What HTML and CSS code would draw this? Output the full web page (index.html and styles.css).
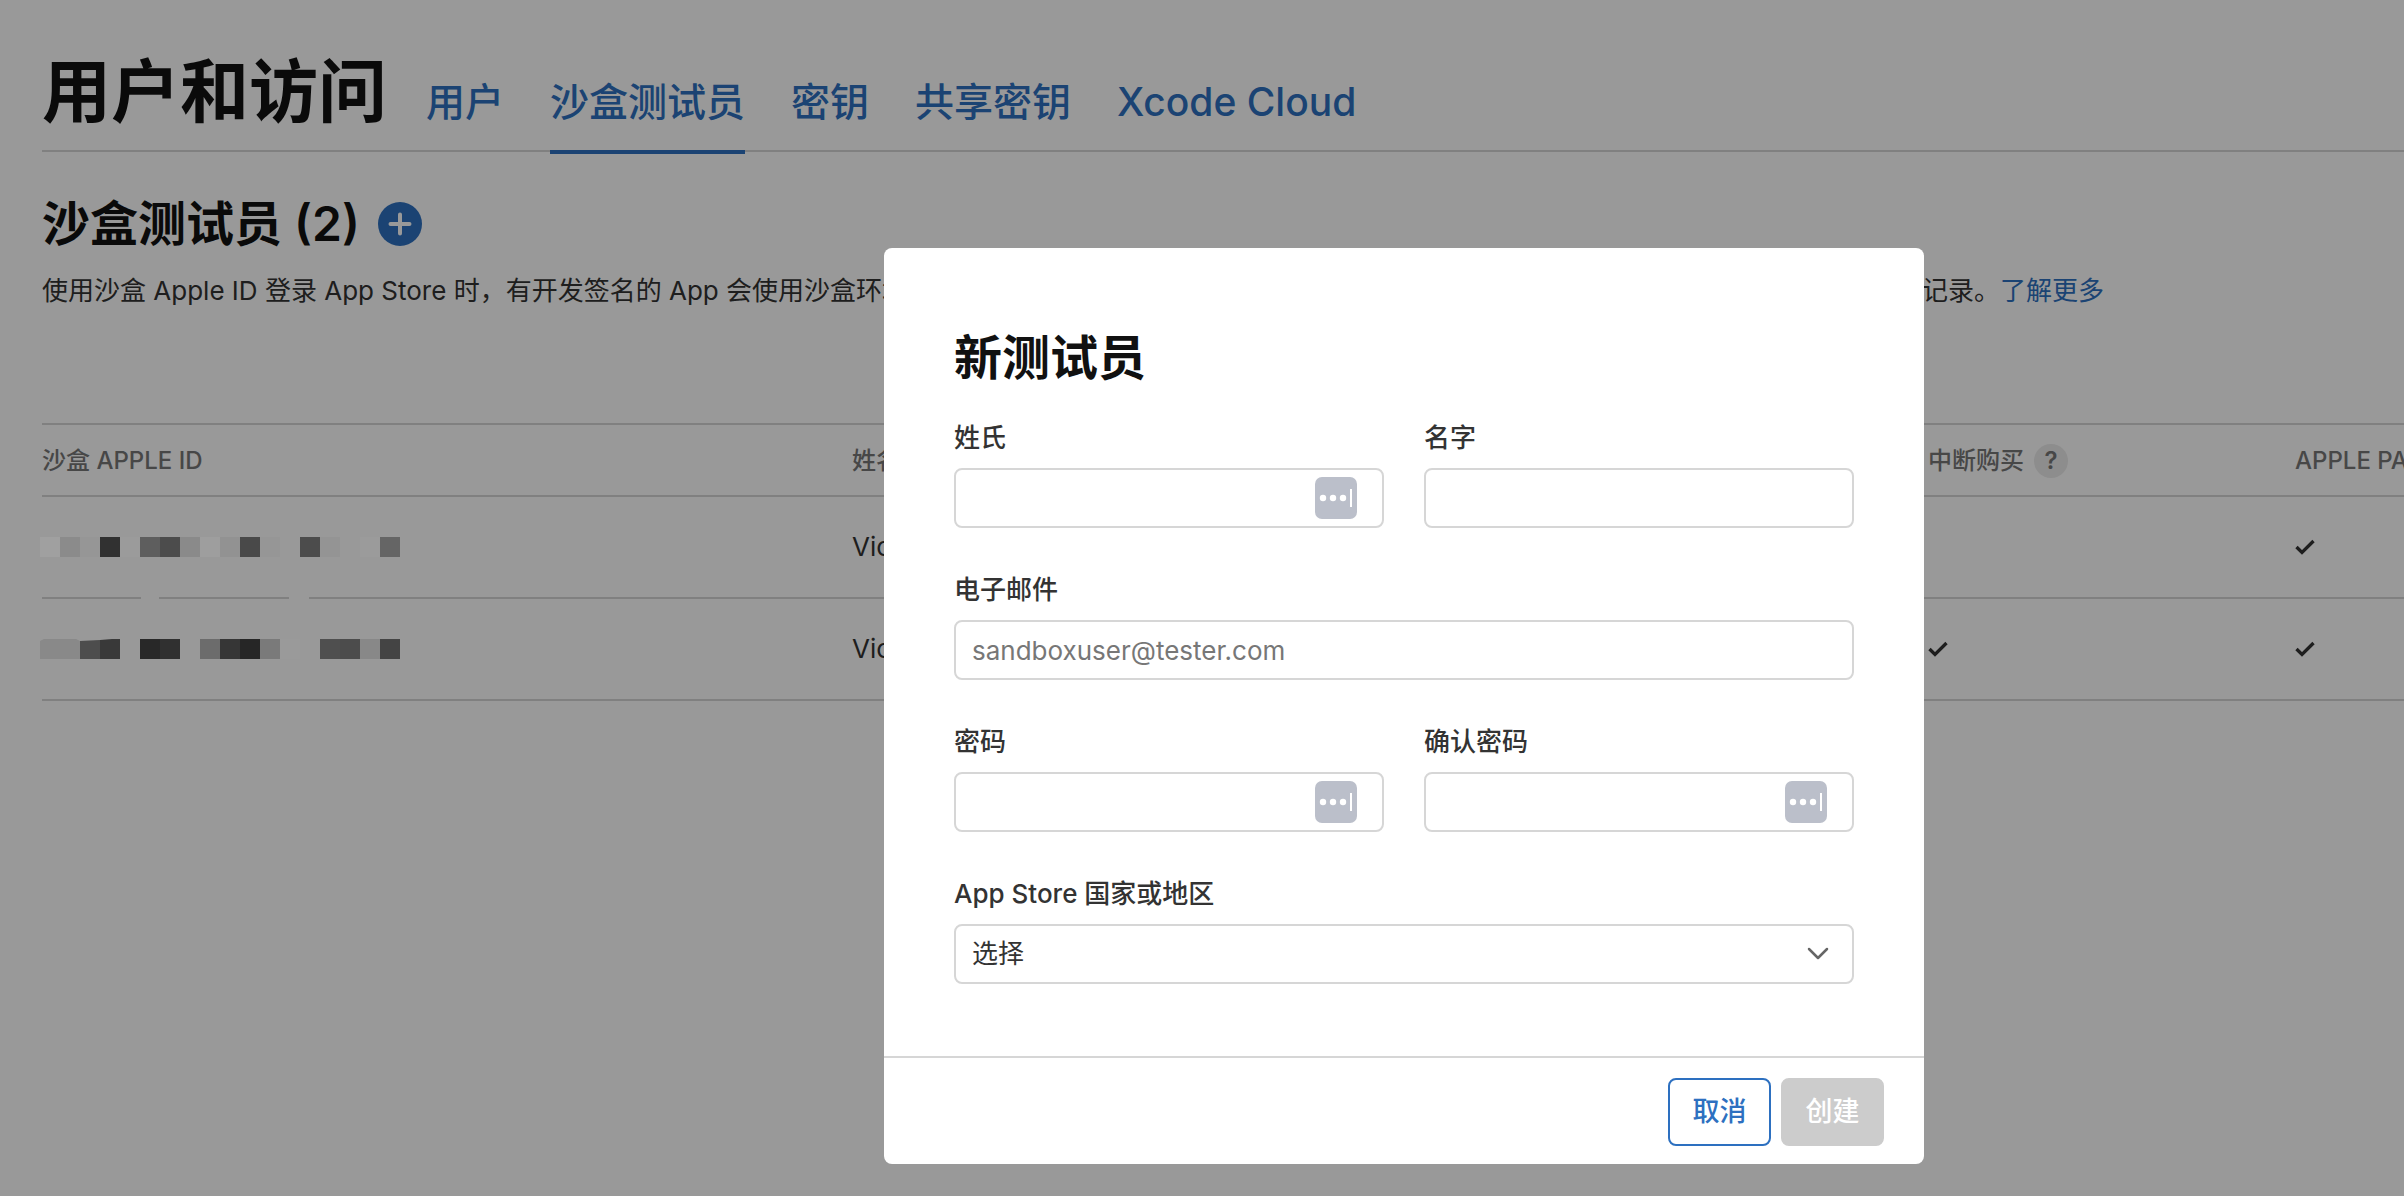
FILE: index.html
```html
<!DOCTYPE html>
<html lang="zh-CN">
<head>
<meta charset="utf-8">
<meta name="viewport" content="width=device-width, initial-scale=1">
<title>用户和访问</title>
<link rel="stylesheet" href="styles.css">
</head>
<body>
<div class="page">
  <header class="page-header">
    <h1 class="page-title">用户和访问</h1>
    <nav class="tabs">
      <a class="tab" href="#users">用户</a>
      <a class="tab tab-active" href="#sandbox" aria-current="page">沙盒测试员</a>
      <a class="tab" href="#keys">密钥</a>
      <a class="tab" href="#shared">共享密钥</a>
      <a class="tab" href="#cloud">Xcode Cloud</a>
    </nav>
  </header>

  <main>
    <div class="section-head">
      <h2 class="section-title">沙盒测试员 (2)</h2>
      <button class="add-button" type="button" aria-label="添加测试员">
        <svg width="44" height="44" viewBox="0 0 44 44" aria-hidden="true"><path d="M22 12.500v19M12.500 22h19" stroke="#fff" stroke-width="4" stroke-linecap="round"/></svg>
      </button>
    </div>
    <p class="intro">使用沙盒 Apple ID 登录 App Store 时，有开发签名的 App 会使用沙盒环境，而不会使用生产环境。您可以在此反复测试购买流程且不会产生费用，也能够清除购买记录。<a class="link" href="#more">了解更多</a></p>

    <table class="testers">
      <colgroup><col class="col-id"><col class="col-name"><col class="col-region"><col class="col-purchase"><col class="col-pay"></colgroup>
      <thead>
        <tr>
          <th scope="col">沙盒 APPLE ID</th>
          <th scope="col">姓名</th>
          <th scope="col"></th>
          <th scope="col"><span class="with-help">中断购买 <button class="help" type="button" aria-label="帮助">?</button></span></th>
          <th scope="col">APPLE PAY</th>
        </tr>
      </thead>
      <tbody>
        <tr>
          <td>
            <svg class="redacted" width="360" height="20" viewBox="0 0 360 20" shape-rendering="crispEdges" aria-hidden="true">
              <path fill="#a0a0a0" d="M0 0h20v20H0z"/><path fill="#8b8b8b" d="M20 0h20v20H20z"/><path fill="#969696" d="M40 0h20v20H40z"/><path fill="#313131" d="M60 0h20v20H60z"/><path fill="#9b9b9b" d="M80 0h20v20H80z"/><path fill="#5e5e5e" d="M100 0h20v20H100z"/><path fill="#4c4c4c" d="M120 0h20v20H120z"/><path fill="#8a8a8a" d="M140 0h20v20H140z"/><path fill="#9e9e9e" d="M160 0h20v20H160z"/><path fill="#929292" d="M180 0h20v20H180z"/><path fill="#494949" d="M200 0h20v20H200z"/><path fill="#969696" d="M220 0h20v20H220z"/><path fill="#4c4c4c" d="M260 0h20v20H260z"/><path fill="#949494" d="M280 0h20v20H280z"/><path fill="#9b9b9b" d="M320 0h20v20H320z"/><path fill="#656565" d="M340 0h20v20H340z"/>
              <path fill="#999" d="M101 56h18v8h-18zM249 56h20v8h-20z"/>
            </svg>
          </td>
          <td>Victor</td><td></td><td></td>
          <td><svg class="check" width="20" height="16" viewBox="0 0 20 16" role="img" aria-label="是"><path d="M1.500 8 7 13.500 18.500 2" fill="none" stroke="#333" stroke-width="3.300"/></svg></td>
        </tr>
        <tr>
          <td>
            <svg class="redacted" width="360" height="20" viewBox="0 0 360 20" aria-hidden="true">
              <path fill="#898989" d="M0 2 4 0h32l4 2v18H0z"/><path fill="#4d4d4d" d="M40 2 60 1v19H40z"/><path fill="#393939" d="M60 1 72 0h8v20H60z"/><path fill="#282828" d="M100 0h20v20h-20z"/><path fill="#303030" d="M120 0h20v20h-20z"/><path fill="#6c6c6c" d="M160 0h20v20h-20z"/><path fill="#363636" d="M180 0h20v20h-20z"/><path fill="#262626" d="M200 0h20v20h-20z"/><path fill="#7a7a7a" d="M220 0h20v20h-20z"/><path fill="#9a9a9a" d="M240 0h20v20h-20z"/><path fill="#4f4f4f" d="M280 0h20v20h-20z"/><path fill="#4c4c4c" d="M300 0h20v20h-20z"/><path fill="#888" d="M320 0h20v20h-20z"/><path fill="#444" d="M340 0h20v20h-20z"/>
            </svg>
          </td>
          <td>Victor</td><td></td>
          <td><svg class="check" width="20" height="16" viewBox="0 0 20 16" role="img" aria-label="是"><path d="M1.500 8 7 13.500 18.500 2" fill="none" stroke="#333" stroke-width="3.300"/></svg></td>
          <td><svg class="check" width="20" height="16" viewBox="0 0 20 16" role="img" aria-label="是"><path d="M1.500 8 7 13.500 18.500 2" fill="none" stroke="#333" stroke-width="3.300"/></svg></td>
        </tr>
      </tbody>
    </table>
  </main>
</div>

<div class="backdrop"></div>
<div class="modal-layer">
  <form class="modal" role="dialog" aria-modal="true" aria-labelledby="modal-title">
    <div class="modal-body">
      <h2 class="modal-title" id="modal-title">新测试员</h2>
      <div class="fields">
        <div class="field">
          <label for="last-name">姓氏</label>
          <div class="control">
            <input id="last-name" type="text">
            <svg class="autofill" width="42" height="42" viewBox="0 0 42 42" aria-hidden="true"><rect width="42" height="42" rx="7" fill="#bbbfca"/><g fill="#fff"><circle cx="8" cy="21" r="3.200"/><circle cx="18" cy="21" r="3.200"/><circle cx="28" cy="21" r="3.200"/><rect x="35" y="12" width="2" height="18"/></g></svg>
          </div>
        </div>
        <div class="field">
          <label for="first-name">名字</label>
          <div class="control"><input id="first-name" type="text"></div>
        </div>
        <div class="field field-wide">
          <label for="email">电子邮件</label>
          <div class="control"><input id="email" type="email" placeholder="sandboxuser@tester.com"></div>
        </div>
        <div class="field">
          <label for="password">密码</label>
          <div class="control">
            <input id="password" type="password">
            <svg class="autofill" width="42" height="42" viewBox="0 0 42 42" aria-hidden="true"><rect width="42" height="42" rx="7" fill="#bbbfca"/><g fill="#fff"><circle cx="8" cy="21" r="3.200"/><circle cx="18" cy="21" r="3.200"/><circle cx="28" cy="21" r="3.200"/><rect x="35" y="12" width="2" height="18"/></g></svg>
          </div>
        </div>
        <div class="field">
          <label for="confirm">确认密码</label>
          <div class="control">
            <input id="confirm" type="password">
            <svg class="autofill" width="42" height="42" viewBox="0 0 42 42" aria-hidden="true"><rect width="42" height="42" rx="7" fill="#bbbfca"/><g fill="#fff"><circle cx="8" cy="21" r="3.200"/><circle cx="18" cy="21" r="3.200"/><circle cx="28" cy="21" r="3.200"/><rect x="35" y="12" width="2" height="18"/></g></svg>
          </div>
        </div>
        <div class="field field-wide">
          <label for="region">App Store 国家或地区</label>
          <div class="control">
            <select id="region"><option>选择</option></select>
            <svg class="chevron" width="22" height="14" viewBox="0 0 22 14" aria-hidden="true"><path d="M2 2l9 9 9-9" fill="none" stroke="#666" stroke-width="2.500" stroke-linecap="round" stroke-linejoin="round"/></svg>
          </div>
        </div>
      </div>
    </div>
    <div class="modal-footer">
      <button class="button button-secondary" type="button">取消</button>
      <button class="button button-primary" type="submit" disabled>创建</button>
    </div>
  </form>
</div>
</body>
</html>
```
FILE: styles.css
```css
* {
  box-sizing: border-box;
}

:root {
  --blue: #2d70c0;
  --line: #d6d6d6;
  --text: #333;
}

body {
  margin: 0;
  background: #fff;
  color: var(--text);
  font-family: Inter, "Noto Sans CJK SC", sans-serif;
  font-size: 26px;
  line-height: 40px;
}

h1, h2, p {
  margin: 0;
}

button, input, select {
  font: inherit;
}

.page {
  min-height: 100vh;
  padding: 52px 0 0 42px;
  overflow: hidden;
}

.page-header {
  display: flex;
  align-items: flex-start;
  gap: 39px;
  height: 100px;
  border-bottom: 2px solid var(--line);
}

.page-title {
  color: #111;
  font-size: 69px;
  font-weight: 600;
  line-height: 80px;
  white-space: nowrap;
}

.tabs {
  display: flex;
  gap: 46px;
}

.tab {
  height: 102px;
  padding-top: 20px;
  color: var(--blue);
  font-size: 39px;
  font-weight: 500;
  line-height: 60px;
  text-decoration: none;
  white-space: nowrap;
}

.tab-active {
  border-bottom: 4px solid var(--blue);
}

.section-head {
  display: flex;
  align-items: center;
  gap: 18px;
  height: 60px;
  margin-top: 42px;
}

.section-title,
.modal-title {
  color: #111;
  font-size: 48px;
  font-weight: 600;
  line-height: 60px;
}

.add-button {
  width: 44px;
  height: 44px;
  padding: 0;
  border: 0;
  border-radius: 50%;
  background: var(--blue);
}

.add-button svg {
  display: block;
}

.intro {
  margin-top: 17px;
  white-space: nowrap;
}

.link {
  color: var(--blue);
  text-decoration: none;
}

.testers {
  width: 2553px;
  margin-top: 112px;
  border-top: 2px solid var(--line);
  border-spacing: 0;
  table-layout: fixed;
}

.col-id { width: 810px; }
.col-name { width: 540px; }
.col-region { width: 536px; }
.col-purchase { width: 367px; }
.col-pay { width: 300px; }

.testers th,
.testers td {
  padding: 0;
  border-bottom: 2px solid var(--line);
  text-align: left;
  vertical-align: middle;
}

.testers th {
  height: 72px;
  padding-top: 2px;
  color: #777;
  font-size: 24px;
  font-weight: 500;
}

.testers td {
  height: 102px;
}

.testers svg {
  display: block;
}

.testers .redacted {
  position: relative;
  z-index: 2;
  margin-left: -2px;
  overflow: visible;
}

.with-help {
  display: flex;
  align-items: center;
  gap: 10px;
}

.help {
  width: 34px;
  height: 34px;
  padding: 0;
  border: 0;
  border-radius: 50%;
  background: #ebebeb;
  color: #777;
  font-size: 24px;
  font-weight: 600;
  line-height: 34px;
}

.backdrop {
  position: fixed;
  inset: 0;
  z-index: 1;
  background: rgba(0, 0, 0, 0.4);
}

.modal-layer {
  position: absolute;
  inset: 0;
  z-index: 3;
  display: flex;
  align-items: flex-start;
  justify-content: center;
  padding: 248px 0 32px 404px;
}

.modal {
  width: 1040px;
  border-radius: 8px;
  background: #fff;
}

.modal-body {
  padding: 80px 70px 72px;
}

.fields {
  display: grid;
  grid-template-columns: 1fr 1fr;
  gap: 42px 40px;
  margin-top: 30px;
}

.field {
  display: flex;
  flex-direction: column;
  gap: 10px;
}

.field-wide {
  grid-column: 1 / -1;
}

.field label {
  font-weight: 500;
}

.control {
  position: relative;
}

.control input,
.control select {
  display: block;
  width: 100%;
  height: 60px;
  padding: 0 16px;
  border: 2px solid var(--line);
  border-radius: 8px;
  outline: 0;
  background: #fff;
  color: var(--text);
  appearance: none;
}

.control input::placeholder {
  color: #777;
  opacity: 1;
}

.autofill {
  position: absolute;
  top: 9px;
  right: 27px;
}

.chevron {
  position: absolute;
  top: 23px;
  right: 25px;
  pointer-events: none;
}

.modal-footer {
  display: flex;
  justify-content: flex-end;
  gap: 10px;
  padding: 20px 40px 18px;
  border-top: 2px solid var(--line);
}

.button {
  width: 103px;
  height: 68px;
  padding: 0;
  border: 2px solid var(--blue);
  border-radius: 8px;
  background: #fff;
  color: var(--blue);
  font-size: 27px;
  font-weight: 500;
}

.button-primary {
  border-color: #ccc;
  background: #ccc;
  color: #fff;
}
```
